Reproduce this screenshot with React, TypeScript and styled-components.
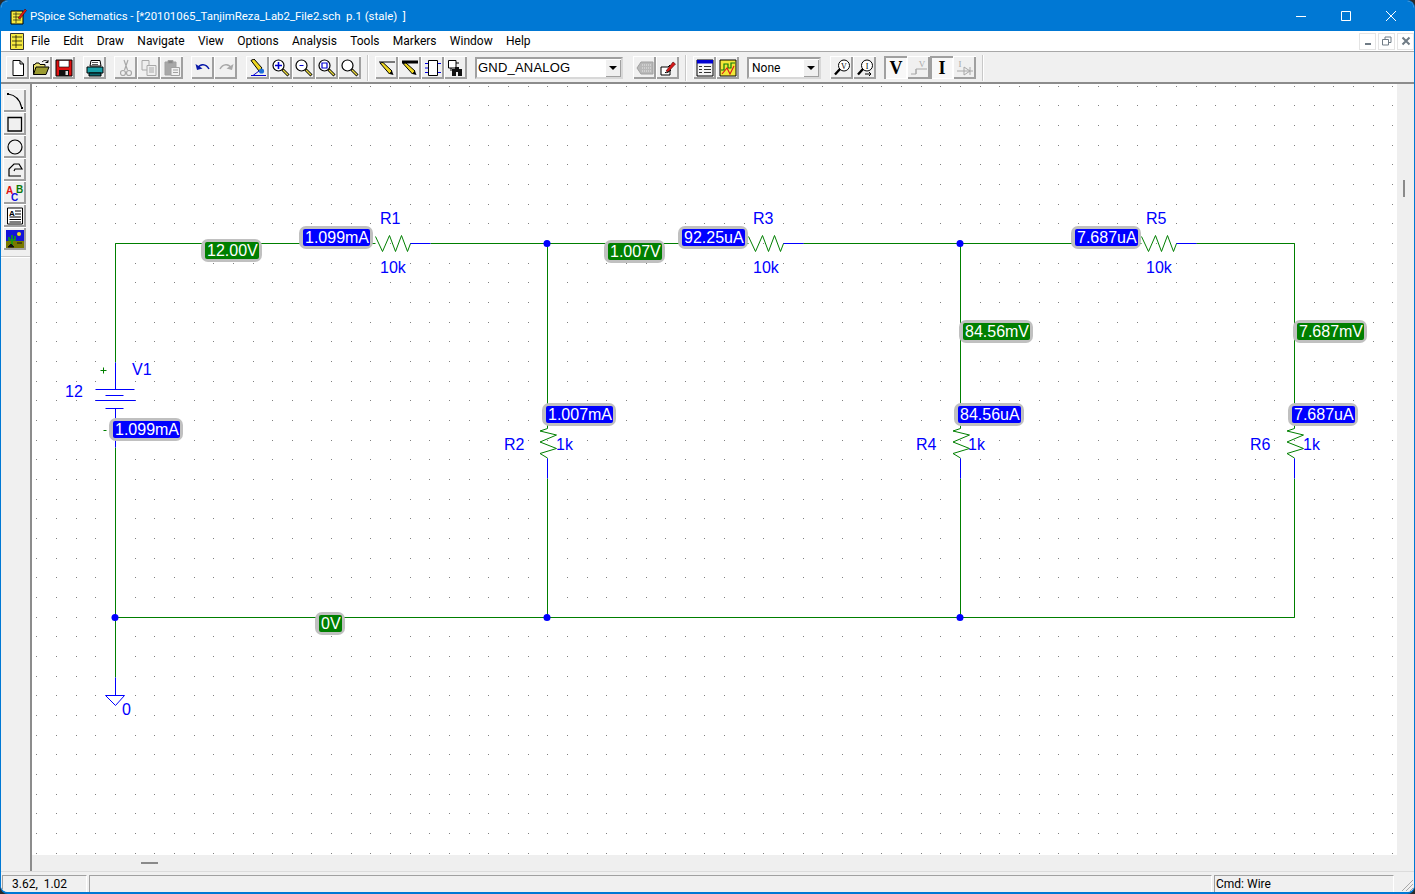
import React from 'react';
import styled, { createGlobalStyle } from 'styled-components';

const GlobalStyle = createGlobalStyle`
  html, body {
    margin: 0;
    padding: 0;
    background: #2b2b2b;
    overflow: hidden;
  }
`;

const UI_FONT = `Roboto, 'Open Sans', sans-serif`;
const CANVAS_X = 32;
const CANVAS_Y = 84;
const WIRE = '#007f00';
const PIN = '#0000ff';

const menus = ['File', 'Edit', 'Draw', 'Navigate', 'View', 'Options', 'Analysis', 'Tools', 'Markers', 'Window', 'Help'];

const badges = [
  { x: 201, y: 239, text: '12.00V', kind: 'v' },
  { x: 299, y: 226, text: '1.099mA', kind: 'i' },
  { x: 109, y: 418, text: '1.099mA', kind: 'i' },
  { x: 315, y: 612, text: '0V', kind: 'v' },
  { x: 604, y: 240, text: '1.007V', kind: 'v' },
  { x: 678, y: 226, text: '92.25uA', kind: 'i' },
  { x: 1071, y: 226, text: '7.687uA', kind: 'i' },
  { x: 959, y: 320, text: '84.56mV', kind: 'v' },
  { x: 1293, y: 320, text: '7.687mV', kind: 'v' },
  { x: 542, y: 403, text: '1.007mA', kind: 'i' },
  { x: 954, y: 403, text: '84.56uA', kind: 'i' },
  { x: 1288, y: 403, text: '7.687uA', kind: 'i' },
];

const partLabels = [
  { x: 380, y: 210, text: 'R1' }, { x: 380, y: 259, text: '10k' },
  { x: 753, y: 210, text: 'R3' }, { x: 753, y: 259, text: '10k' },
  { x: 1146, y: 210, text: 'R5' }, { x: 1146, y: 259, text: '10k' },
  { x: 132, y: 361, text: 'V1' }, { x: 65, y: 383, text: '12' },
  { x: 504, y: 436, text: 'R2' }, { x: 556, y: 436, text: '1k' },
  { x: 916, y: 436, text: 'R4' }, { x: 968, y: 436, text: '1k' },
  { x: 1250, y: 436, text: 'R6' }, { x: 1303, y: 436, text: '1k' },
  { x: 122, y: 701, text: '0' },
];

// grid dots are spaced on the schematic's own 0.1in pitch
const gridPath = () => {
  let d = '';
  for (let i = 0; i < 70; i++) {
    for (let j = 0; j < 40; j++) {
      const x = Math.round(36.4 + i * 19.65);
      const y = Math.round(85.6 + j * 19.67);
      if (x < 1394 && y < 855) d += `M${x} ${y}h1v1h-1z`;
    }
  }
  return d;
};

const hZig = (x: number) =>
  `M${x} 236L${x + 7} 251L${x + 14} 235L${x + 20} 251L${x + 26} 235L${x + 32} 251L${x + 35} 243`;
const vZig = (x: number) =>
  `M${x} 428L${x - 7.5} 430.5L${x + 9} 434.5L${x - 7.5} 441.5L${x + 9} 448L${x - 7.5} 453L${x} 457.5V458`;

const Schematic = () => (
  <Drawing width="1364" height="772" viewBox={`${CANVAS_X} ${CANVAS_Y} 1364 772`}>
    <path d={gridPath()} fill="#808080" />
    <g fill="none" strokeWidth="1" transform="translate(.5 .5)">
      <path
        stroke={WIRE}
        d="M115 362V243H375M430 243H748M803 243H1141M1196 243H1294V428M1294 478V617H115M115 447V677M547 243V428M547 478V617M960 243V428M960 478V617"
      />
      <path stroke={WIRE} d={`${hZig(375)}${hZig(748)}${hZig(1141)}${vZig(547)}${vZig(960)}${vZig(1294)}`} />
      <path
        stroke={PIN}
        d="M410 243H430M783 243H803M1176 243H1196M547 458V478M960 458V478M1294 458V478M115 362V389M95 389H134M105 395H123M95 400H135M105 408H123M115 408V447M115 677V695M105 695H124L115 705Z"
      />
      <path stroke={WIRE} d="M100 370H106M103 367V373M103 430H106" />
    </g>
    <g fill={PIN}>
      <circle cx="115" cy="617.5" r="3.5" />
      <circle cx="547" cy="243.5" r="3.5" />
      <circle cx="547" cy="617.5" r="3.5" />
      <circle cx="960" cy="243.5" r="3.5" />
      <circle cx="960" cy="617.5" r="3.5" />
    </g>
  </Drawing>
);

const Ico = ({ children }: { children: React.ReactNode }) => (
  <svg width="18" height="18" viewBox="0 0 18 18">{children}</svg>
);

const Lens = ({ children }: { children?: React.ReactNode }) => (
  <>
    <path d="M10.5 10.5L16.5 16.5" stroke="#000" strokeWidth="3" />
    <path d="M11 11L16 16" stroke="#e8d840" strokeWidth="1.4" />
    <circle cx="6.5" cy="6.5" r="5.5" fill="#fff" stroke="#000" strokeWidth="1.2" />
    {children}
  </>
);

const icons: Record<string, React.ReactNode> = {
  new: <path d="M4 1.5H11L14.5 5V16.5H4Z M11 1.5V5H14.5" fill="#fff" stroke="#000" />,
  open: (
    <>
      <path d="M1.5 15.5V5.5H3L4 4H7L8 5.5H13V7.5" fill="#e8e070" stroke="#000" />
      <path d="M1.5 15.5L4 8H17L14 15.5Z" fill="#9a9a30" stroke="#000" />
      <path d="M10 3C12 1 14 1 16 3M16 1V3.5H13.5" fill="none" stroke="#000" />
    </>
  ),
  save: (
    <>
      <path d="M1 1H17V17H1Z" fill="#e01010" stroke="#000" />
      <path d="M4 1.5H14V8H4Z" fill="#fff" stroke="#000" strokeWidth=".6" />
      <path d="M4 11H14V17H4Z" fill="#111" />
      <path d="M10.5 12H13V16H10.5Z" fill="#ddd" />
    </>
  ),
  print: (
    <>
      <path d="M5 1.5H14L15 7H4Z" fill="#fff" stroke="#000" />
      <path d="M6 3.5H12M6 5.5H12" stroke="#555" />
      <path d="M1 8H17V14H1Z" fill="#18a0a8" stroke="#000" />
      <path d="M3 14H15V17H3Z" fill="#0c6870" stroke="#000" />
    </>
  ),
  cut: (
    <g fill="none" stroke="#a8a8a8" strokeWidth="1.2">
      <path d="M7 1L10.5 11M11 1L7.5 11" />
      <circle cx="6" cy="14" r="2.5" />
      <circle cx="12" cy="14" r="2.5" />
    </g>
  ),
  copy: (
    <g fill="#eee" stroke="#a8a8a8">
      <path d="M2 1.5H9V11H2Z" />
      <path d="M7 6.5H16V16.5H7Z" />
      <path d="M9 9H14M9 11H14M9 13H14" />
    </g>
  ),
  paste: (
    <g stroke="#a0a0a0">
      <path d="M2 3H13V16H2Z" fill="#a8a8a8" />
      <path d="M5 1.5H10V4.5H5Z" fill="#888" />
      <path d="M8 8.5H16.5V16.5H8Z" fill="#f0f0f0" />
      <path d="M10 11H15M10 13.5H15" />
    </g>
  ),
  undo: (
    <>
      <path d="M4 9C6 4.5 12 4.5 15 10" fill="none" stroke="#0818a8" strokeWidth="1.5" />
      <path d="M1.5 5L3 11L8.5 9.5Z" fill="#0818a8" />
    </>
  ),
  redo: (
    <>
      <path d="M14 9C12 4.5 6 4.5 3 10" fill="none" stroke="#a8a8a8" strokeWidth="1.5" />
      <path d="M16.5 5L15 11L9.5 9.5Z" fill="#a8a8a8" />
    </>
  ),
  wire: (
    <>
      <path d="M2 1.5L5 0L13 9L10 12Z" fill="#f0d820" stroke="#000" />
      <circle cx="12.5" cy="12" r="2.6" fill="#1c70d8" />
      <path d="M2 16.5H17" stroke="#0000d0" strokeWidth="1.2" />
      <path d="M4 16.5L10 12" stroke="#0000d0" />
    </>
  ),
  zoomIn: (
    <Lens>
      <path d="M3 6.5H10M6.5 3V10" stroke="#0000d0" strokeWidth="1.6" />
    </Lens>
  ),
  zoomOut: (
    <Lens>
      <path d="M4.5 6.5H8.5" stroke="#0000d0" strokeWidth="1.2" />
    </Lens>
  ),
  zoomArea: (
    <Lens>
      <path d="M4 4H9V9H4Z" fill="none" stroke="#0000d0" strokeWidth="1.2" />
    </Lens>
  ),
  zoomFit: <Lens />,
  pencilThin: (
    <>
      <path d="M1 3H17" stroke="#000" />
      <path d="M2 4L5 3.5L14 12L11.5 15Z" fill="#f0d820" stroke="#000" />
      <path d="M11.5 15L14 12L15.5 16Z" fill="#000" />
    </>
  ),
  pencilBus: (
    <>
      <path d="M1 3H17" stroke="#000" strokeWidth="3" />
      <path d="M2 4.5L5 4L14 12L11.5 15Z" fill="#f0d820" stroke="#000" />
      <path d="M11.5 15L14 12L15.5 16Z" fill="#000" />
    </>
  ),
  part: (
    <>
      <path d="M4.5 1.5H13.5V16.5H4.5Z" fill="#fff" stroke="#000" />
      <path d="M1 4.5H4M1 9H4M1 13.5H4M14 4.5H17M14 13.5H17" stroke="#0000e0" strokeWidth="1.2" />
    </>
  ),
  browse: (
    <>
      <path d="M1.5 1.5H9V9H1.5Z" fill="#fff" stroke="#000" />
      <path d="M9 4H12M4 9V12" stroke="#000" />
      <path d="M5 10H9V17H5ZM11 10H15V17H11ZM8 8H12V13H8Z" fill="#111" />
    </>
  ),
  tag: (
    <>
      <path d="M1 9L5 3H17V15H5Z" fill="#b8b8b8" stroke="#a0a0a0" />
      <path d="M6 6H16M6 9H16M6 12H16" stroke="#e8e8e8" strokeDasharray="1 1" />
    </>
  ),
  attr: (
    <>
      <path d="M2 8H9L11 6V16H2Z" fill="#fff" stroke="#000" />
      <path d="M7 12L14 3L16.5 5L9 13Z" fill="#d81818" stroke="#400" strokeWidth=".6" />
      <path d="M6 13.5C8 14 10 13 12 11" fill="none" stroke="#000" />
    </>
  ),
  symbols: (
    <>
      <path d="M1 1H17V17H1Z" fill="#f4f4f4" stroke="#000" />
      <path d="M1 1H17V4.5H1Z" fill="#0000d0" />
      <path d="M3 7.5H6M3 10.5H6M3 13.5H6M8 7.5H15M8 10.5H15M8 13.5H15" stroke="#333" />
    </>
  ),
  wave: (
    <>
      <path d="M1 1H17V17H1Z" fill="#f2e838" stroke="#000" />
      <path d="M2 11H5V5H9V9H12V4H16" fill="none" stroke="#0a7a0a" strokeWidth="1.2" />
      <path d="M3 15L8 9L11 15L15 7" fill="none" stroke="#d81818" strokeWidth="1.1" />
    </>
  ),
  probeV: (
    <>
      <circle cx="11" cy="6.5" r="5.5" fill="#fff" stroke="#000" />
      <path d="M7 10L2 15.5" stroke="#000" strokeWidth="2.4" />
      <text x="11" y="9.5" textAnchor="middle" fontSize="8" fontFamily="Liberation Serif, serif">V</text>
    </>
  ),
  probeI: (
    <>
      <circle cx="11" cy="6.5" r="5.5" fill="#fff" stroke="#000" />
      <path d="M7 10L2 15.5" stroke="#000" strokeWidth="2.4" />
      <text x="11" y="9.5" textAnchor="middle" fontSize="8" fontFamily="Liberation Serif, serif">I</text>
      <path d="M9 15H15M13 13L15 15L13 17" stroke="#000" fill="none" />
    </>
  ),
  bigV: <text x="9" y="15" textAnchor="middle" fontSize="18" fontWeight="700" fontFamily="Liberation Serif, serif">V</text>,
  bigI: <text x="9" y="15" textAnchor="middle" fontSize="18" fontWeight="700" fontFamily="Liberation Serif, serif">I</text>,
  dimV: (
    <>
      <text x="12" y="8" textAnchor="middle" fontSize="9" fill="#a8a8a8" fontFamily="Liberation Serif, serif">V</text>
      <path d="M1 15H6V10H17M6 10V15" fill="none" stroke="#a8a8a8" />
    </>
  ),
  dimI: (
    <>
      <text x="4" y="8" textAnchor="middle" fontSize="9" fill="#a8a8a8" fontFamily="Liberation Serif, serif">I</text>
      <path d="M1 12H17M8 8V16L14 12ZM14 8V16" fill="none" stroke="#a8a8a8" />
    </>
  ),
  arc: (
    <>
      <path d="M2 2C9 3 14 8 15.5 15" fill="none" stroke="#000" strokeWidth="1.2" />
      <path d="M1 1h2v2h-2zM15 15h2v2h-2z" fill="#000" />
    </>
  ),
  box: <path d="M2 2.5H15.5V16H2Z" fill="none" stroke="#000" strokeWidth="1.3" />,
  circle: <circle cx="9" cy="9" r="7" fill="none" stroke="#000" strokeWidth="1.2" />,
  poly: <path d="M15 15H3V8L8 3H13L16 8H9L8 10" fill="none" stroke="#000" strokeWidth="1.2" />,
  abc: (
    <g fontFamily="Liberation Sans, sans-serif" fontWeight="700" fontSize="10">
      <text x="0" y="10" fill="#e01010">A</text>
      <text x="10" y="8.5" fill="#0a7a0a">B</text>
      <text x="5" y="16.5" fill="#1010e0">C</text>
    </g>
  ),
  textBox: (
    <>
      <path d="M1.5 1H16.5V17H1.5Z" fill="#fff" stroke="#000" />
      <text x="3" y="8.5" fontSize="8" fontWeight="700" fontFamily="Liberation Sans, sans-serif">A</text>
      <path d="M9 4H15M9 7H15M3.5 10H15M3.5 12.5H15M3.5 15H15" stroke="#000" />
    </>
  ),
  image: (
    <>
      <path d="M0 0H18V11H0Z" fill="#1414d8" />
      <path d="M0 11H18V18H0Z" fill="#787800" />
      <circle cx="13" cy="4" r="2" fill="#f0e020" />
      <path d="M6 15V5M3 7V10H9V6" fill="none" stroke="#10a010" strokeWidth="1.6" />
      <path d="M2 17H8L5 14ZM11 13H16" stroke="#111" fill="#111" />
    </>
  ),
};

const App = () => (
  <Window>
    <GlobalStyle />
    <TitleBar>
      <TitleIcon width="17" height="17" viewBox="0 0 17 17">
        <path d="M1 3H13V16H1Z" fill="#f6ea40" stroke="#000" />
        <path d="M3 6H11M3 9H11M3 12H11M6 4V15" stroke="#000" strokeWidth=".6" />
        <path d="M8 10L15 1L16.5 2.5L10 11Z" fill="#e01818" stroke="#300" strokeWidth=".5" />
      </TitleIcon>
      <TitleText>PSpice Schematics - [*20101065_TanjimReza_Lab2_File2.sch&nbsp; p.1 (stale)&nbsp; ]</TitleText>
      <WinButtons>
        <WinButton>
          <svg width="12" height="12" viewBox="0 0 12 12"><path d="M1 6.5H11" stroke="#fff" /></svg>
        </WinButton>
        <WinButton>
          <svg width="12" height="12" viewBox="0 0 12 12"><path d="M1.5 1.5H10.5V10.5H1.5Z" fill="none" stroke="#fff" /></svg>
        </WinButton>
        <WinButton>
          <svg width="12" height="12" viewBox="0 0 12 12"><path d="M1 1L11 11M11 1L1 11" stroke="#fff" /></svg>
        </WinButton>
      </WinButtons>
    </TitleBar>

    <MenuBar>
      <MenuIcon width="14" height="17" viewBox="0 0 14 17">
        <path d="M.5 .5H13.5V16.5H.5Z" fill="#f6ea40" stroke="#333" />
        <path d="M2 4H12M2 8H12M2 12H12M6 2V15" stroke="#000" strokeWidth=".7" />
      </MenuIcon>
      <MenuItems>
        {menus.map((m) => <MenuItem key={m}>{m}</MenuItem>)}
      </MenuItems>
      <MdiButtons>
        <MdiButton>
          <svg width="10" height="10" viewBox="0 0 10 10"><path d="M2 8H8" stroke="#6f7b85" strokeWidth="2" /></svg>
        </MdiButton>
        <MdiButton>
          <svg width="10" height="10" viewBox="0 0 10 10"><path d="M.5 3.5H6.5V9H.5ZM3 3V1H9V6.5H7" fill="none" stroke="#6f7b85" /></svg>
        </MdiButton>
        <MdiButton>
          <svg width="10" height="10" viewBox="0 0 10 10"><path d="M1.5 1.5L8.5 8.5M8.5 1.5L1.5 8.5" stroke="#6f7b85" strokeWidth="2" /></svg>
        </MdiButton>
      </MdiButtons>
    </MenuBar>

    <Toolbar>
      <ToolGroup>
        <Tool><Ico>{icons.new}</Ico></Tool>
        <Tool><Ico>{icons.open}</Ico></Tool>
        <Tool><Ico>{icons.save}</Ico></Tool>
      </ToolGroup>
      <ToolGroup><Tool><Ico>{icons.print}</Ico></Tool></ToolGroup>
      <ToolGroup>
        <Tool><Ico>{icons.cut}</Ico></Tool>
        <Tool><Ico>{icons.copy}</Ico></Tool>
        <Tool><Ico>{icons.paste}</Ico></Tool>
      </ToolGroup>
      <ToolGroup>
        <Tool><Ico>{icons.undo}</Ico></Tool>
        <Tool><Ico>{icons.redo}</Ico></Tool>
      </ToolGroup>
      <ToolGroup $shift={1}>
        <Tool><Ico>{icons.wire}</Ico></Tool>
        <Tool><Ico>{icons.zoomIn}</Ico></Tool>
        <Tool><Ico>{icons.zoomOut}</Ico></Tool>
        <Tool><Ico>{icons.zoomArea}</Ico></Tool>
        <Tool><Ico>{icons.zoomFit}</Ico></Tool>
      </ToolGroup>
      <ToolSep />
      <ToolGroup>
        <Tool><Ico>{icons.pencilThin}</Ico></Tool>
        <Tool><Ico>{icons.pencilBus}</Ico></Tool>
        <Tool><Ico>{icons.part}</Ico></Tool>
        <Tool><Ico>{icons.browse}</Ico></Tool>
      </ToolGroup>
      <Combo $width={148}>
        <PartText>GND_ANALOG</PartText>
        <ComboArrow />
      </Combo>
      <ToolGroup $shift={2}>
        <Tool><Ico>{icons.tag}</Ico></Tool>
        <Tool><Ico>{icons.attr}</Ico></Tool>
      </ToolGroup>
      <ToolSep />
      <ToolGroup>
        <Tool><Ico>{icons.symbols}</Ico></Tool>
        <Tool><Ico>{icons.wave}</Ico></Tool>
      </ToolGroup>
      <Combo $width={74}>
        <NoneText>None</NoneText>
        <ComboArrow />
      </Combo>
      <ToolGroup $shift={1}>
        <Tool><Ico>{icons.probeV}</Ico></Tool>
        <Tool><Ico>{icons.probeI}</Ico></Tool>
      </ToolGroup>
      <ToolGroup>
        <Tool $pressed><Ico>{icons.bigV}</Ico></Tool>
        <Tool><Ico>{icons.dimV}</Ico></Tool>
        <Tool $pressed><Ico>{icons.bigI}</Ico></Tool>
        <Tool><Ico>{icons.dimI}</Ico></Tool>
      </ToolGroup>
      <ToolSep />
    </Toolbar>

    <Main>
      <Palette>
        {['arc', 'box', 'circle', 'poly', 'abc', 'textBox', 'image'].map((k) => (
          <PaletteTool key={k}><Ico>{icons[k]}</Ico></PaletteTool>
        ))}
        <PaletteEnd />
      </Palette>
      <Center>
        <Canvas>
          <Schematic />
          {partLabels.map((l) => (
            <PartLabel key={`${l.text}-${l.x}-${l.y}`} $x={l.x} $y={l.y}>{l.text}</PartLabel>
          ))}
          {badges.map((b) => (
            <Badge key={`${b.text}-${b.x}`} $x={b.x} $y={b.y}>
              <BadgeValue $kind={b.kind}>{b.text}</BadgeValue>
            </Badge>
          ))}
        </Canvas>
        <HScroll><HThumb /></HScroll>
      </Center>
      <VScroll><VThumb /></VScroll>
    </Main>

    <StatusBar>
      <StatusCell $width={85}>3.62,&nbsp; 1.02</StatusCell>
      <StatusCell $grow />
      <StatusCell $width={180}>Cmd: Wire</StatusCell>
      <Grip width="17" height="17" viewBox="0 0 17 17">
        <path d="M16 5L5 16M16 9L9 16M16 13L13 16" stroke="#a8a8a8" />
      </Grip>
    </StatusBar>
  </Window>
);

export default App;

const Window = styled.div`
  box-sizing: border-box;
  width: 1415px;
  height: 894px;
  display: flex;
  flex-direction: column;
  background: #f0f0f0;
  border: 1px solid #0078d4;
  border-bottom-width: 2px;
  border-radius: 8px;
  overflow: hidden;
  font-family: ${UI_FONT};
`;

const TitleBar = styled.div`
  height: 30px;
  flex: none;
  display: flex;
  align-items: center;
  background: #0078d4;
  color: #fff;
  padding-left: 9px;
`;

const TitleIcon = styled.svg`
  flex: none;
  margin-right: 3px;
`;

const TitleText = styled.div`
  flex: 1;
  font-size: 11.4px;
  white-space: pre;
`;

const WinButtons = styled.div`
  display: flex;
  height: 100%;
  padding-right: 1px;
`;

const WinButton = styled.div`
  width: 45px;
  display: flex;
  align-items: center;
  justify-content: center;
`;

const MenuBar = styled.div`
  height: 20px;
  flex: none;
  display: flex;
  align-items: center;
  background: #fff;
  padding-left: 9px;
`;

const MenuIcon = styled.svg`
  flex: none;
  margin-right: 7px;
`;

const MenuItems = styled.div`
  flex: 1;
  display: flex;
  gap: 13.3px;
`;

const MenuItem = styled.span`
  font-size: 12px;
  line-height: 18px;
  color: #000;
`;

const MdiButtons = styled.div`
  display: flex;
  gap: 2px;
`;

const MdiButton = styled.div`
  box-sizing: border-box;
  width: 17px;
  height: 17px;
  display: flex;
  align-items: center;
  justify-content: center;
  background: #fff;
  border: 1px solid #e4e4e4;
`;

const Toolbar = styled.div`
  box-sizing: border-box;
  height: 33px;
  flex: none;
  display: flex;
  align-items: center;
  gap: 8px;
  padding: 1px 0 0 5px;
  background: #f0f0f0;
  border-top: 1px solid #a8a8a8;
  border-bottom: 2px solid #8c8c8c;
`;

const ToolGroup = styled.div<{ $shift?: number }>`
  display: flex;
  margin-left: ${(p) => p.$shift || 0}px;
`;

const Tool = styled.div<{ $pressed?: boolean }>`
  box-sizing: border-box;
  width: 23px;
  height: 23px;
  display: flex;
  align-items: center;
  justify-content: center;
  background: ${(p) => (p.$pressed ? '#f8f8f8' : '#f0f0f0')};
  box-shadow: ${(p) =>
    p.$pressed
      ? 'inset 2px 2px 0 #a0a0a0, inset -1px -1px 0 #fff'
      : 'inset 1px 1px 0 #fff, inset -2px -2px 0 #a0a0a0'};
`;

const ToolSep = styled.div`
  width: 2px;
  height: 26px;
  margin: 0 -2px;
  background: #c8c8c8;
  border-right: 1px solid #fff;
  box-sizing: border-box;
`;

const Combo = styled.div<{ $width: number }>`
  box-sizing: border-box;
  width: ${(p) => p.$width}px;
  height: 22px;
  display: flex;
  align-items: center;
  background: #fff;
  border: 2px solid #a0a0a0;
  border-right-color: #d8d8d8;
  border-bottom-color: #d8d8d8;
`;

const PartText = styled.div`
  flex: 1;
  padding-left: 1px;
  font-family: 'Liberation Sans', sans-serif;
  font-size: 13px;
  letter-spacing: 0.2px;
  color: #000;
`;

const NoneText = styled.div`
  flex: 1;
  padding-left: 3px;
  font-size: 12px;
  color: #000;
`;

const ComboArrow = styled.div`
  box-sizing: border-box;
  width: 16px;
  height: 18px;
  flex: none;
  display: flex;
  align-items: center;
  justify-content: center;
  background: #f0f0f0;
  box-shadow: inset 1px 1px 0 #fff, inset -1px -1px 0 #a0a0a0;

  &::after {
    content: '';
    border-left: 4px solid transparent;
    border-right: 4px solid transparent;
    border-top: 4px solid #000;
  }
`;

const Main = styled.div`
  flex: 1;
  min-height: 0;
  display: flex;
`;

const Palette = styled.div`
  box-sizing: border-box;
  width: 31px;
  flex: none;
  display: flex;
  flex-direction: column;
  padding: 5px 0 0 2px;
  background: #f0f0f0;
  border-right: 2px solid #8c8c8c;
`;

const PaletteTool = styled(Tool)`
  width: 23px;
`;

const PaletteEnd = styled.div`
  margin: 6px 0 0 -2px;
  border-top: 1px solid #c8c8c8;
  border-bottom: 1px solid #fff;
`;

const Center = styled.div`
  flex: 1;
  min-width: 0;
  display: flex;
  flex-direction: column;
`;

const Canvas = styled.div`
  position: relative;
  flex: 1;
  overflow: hidden;
  background: #fff;
`;

const Drawing = styled.svg`
  display: block;
  position: absolute;
  left: 0;
  top: 0;
`;

const PartLabel = styled.span<{ $x: number; $y: number }>`
  position: absolute;
  left: ${(p) => p.$x - CANVAS_X}px;
  top: ${(p) => p.$y - CANVAS_Y}px;
  font-family: 'Liberation Sans', sans-serif;
  font-size: 16px;
  line-height: 18px;
  color: #0000ff;
`;

const Badge = styled.div<{ $x: number; $y: number }>`
  position: absolute;
  left: ${(p) => p.$x - CANVAS_X}px;
  top: ${(p) => p.$y - CANVAS_Y}px;
  padding: 3px 3px 3px 4px;
  border-radius: 7px;
  background: #c0c0c0;
  display: flex;
`;

const BadgeValue = styled.span<{ $kind: string }>`
  padding: 0 1px 0 2px;
  height: 17px;
  border-radius: 2px;
  background: ${(p) => (p.$kind === 'v' ? '#007f00' : '#0000ff')};
  font-family: 'Liberation Sans', sans-serif;
  font-size: 16px;
  line-height: 17px;
  color: #fff;
  white-space: nowrap;
`;

const HScroll = styled.div`
  height: 16px;
  flex: none;
  background: #efefef;
  position: relative;
`;

const HThumb = styled.div`
  position: absolute;
  left: 109px;
  top: 7px;
  width: 17px;
  height: 2px;
  background: #8a8a8a;
`;

const VScroll = styled.div`
  width: 17px;
  flex: none;
  position: relative;
  background: #efefef;
`;

const VThumb = styled.div`
  position: absolute;
  left: 6px;
  top: 96px;
  width: 2px;
  height: 17px;
  background: #8a8a8a;
`;

const StatusBar = styled.div`
  box-sizing: border-box;
  height: 21px;
  flex: none;
  display: flex;
  align-items: flex-end;
  gap: 2px;
  padding-left: 1px;
  background: #f0f0f0;
  border-top: 1px solid #dcdcdc;
`;

const StatusCell = styled.div<{ $width?: number; $grow?: boolean }>`
  box-sizing: border-box;
  height: 17px;
  flex: ${(p) => (p.$grow ? '1' : 'none')};
  width: ${(p) => (p.$width ? `${p.$width}px` : 'auto')};
  padding-left: ${(p) => (p.$width === 85 ? 9 : 1)}px;
  border-top: 1px solid #a0a0a0;
  border-left: 1px solid #a0a0a0;
  border-right: 1px solid #fff;
  font-size: 12px;
  line-height: 17px;
  color: #000;
  white-space: nowrap;
`;

const Grip = styled.svg`
  flex: none;
  margin-left: 1px;
`;
